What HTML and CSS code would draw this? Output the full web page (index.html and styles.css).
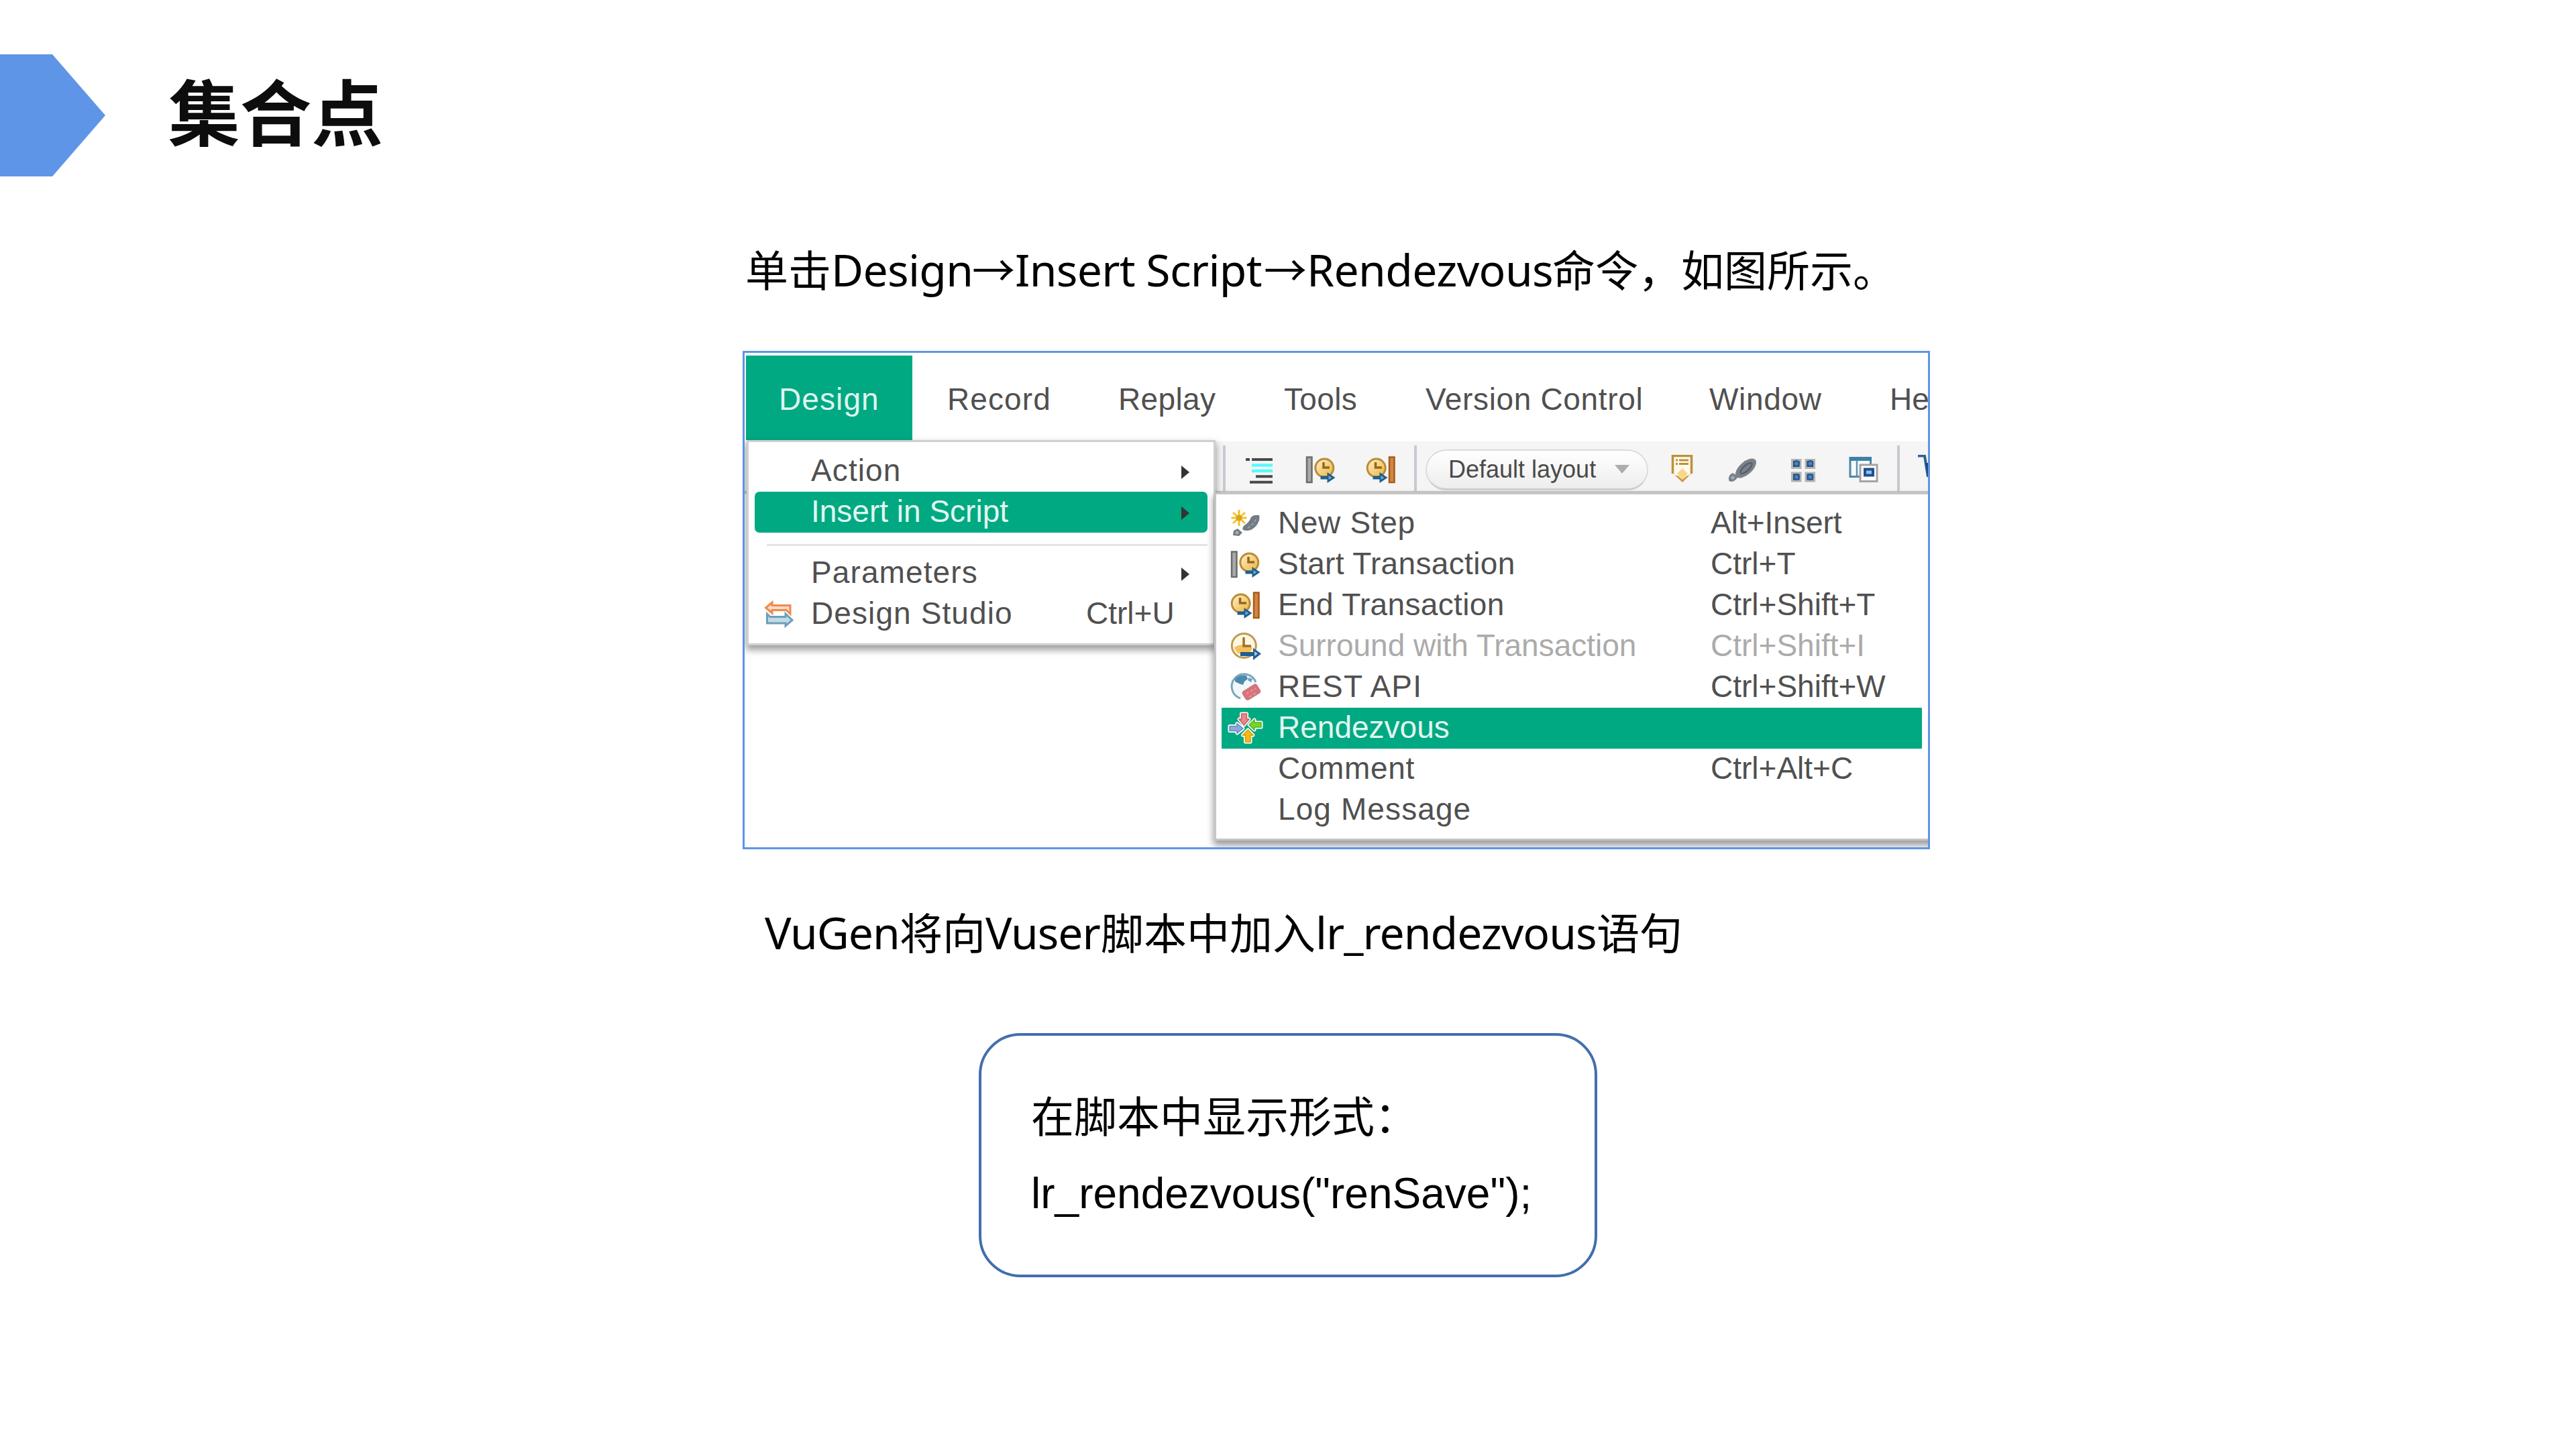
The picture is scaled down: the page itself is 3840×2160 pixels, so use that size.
FILE: index.html
```html
<!DOCTYPE html>
<html lang="zh-CN">
<head>
<meta charset="utf-8">
<title>集合点</title>
<link rel="stylesheet" href="styles.css">
</head>
<body>
<svg class="defs" aria-hidden="true">
  <defs>
    <linearGradient id="gold" x1="0" y1="0" x2="1" y2="1">
      <stop offset="0" stop-color="#fff0cd"/><stop offset="1" stop-color="#eeb23c"/>
    </linearGradient>
    <radialGradient id="dot"><stop offset="0" stop-color="#5b9ad8"/><stop offset="1" stop-color="#1d4878"/></radialGradient>
    <symbol id="arrow" viewBox="0 0 24 18">
      <path d="M1 6.5H11V1L23 9L11 17V11.5H1Z" fill="#1f5f8f"/>
      <path d="M13 6L18 9L13 12Z" fill="#7aaace"/>
    </symbol>
    <symbol id="start" viewBox="0 0 48 45">
      <rect x="3" y="3.5" width="7.5" height="37.500" fill="#a9a9a9" stroke="#6c6c6c" stroke-width="2.500"/>
      <circle cx="29.300" cy="19.500" r="13.500" fill="url(#gold)" stroke="#b98d36" stroke-width="3"/>
      <path d="M28 11V19H37" fill="none" stroke="#94691a" stroke-width="3.500"/>
      <use href="#arrow" x="22.500" y="25" width="24" height="18"/>
    </symbol>
    <symbol id="end" viewBox="0 0 48 45">
      <circle cx="16.700" cy="19.500" r="13.500" fill="url(#gold)" stroke="#b98d36" stroke-width="3"/>
      <path d="M15.500 11V19H25" fill="none" stroke="#94691a" stroke-width="3.500"/>
      <use href="#arrow" x="10.500" y="25" width="24" height="18"/>
      <rect x="36" y="3.500" width="7.500" height="37.500" fill="#cf8646" stroke="#a85c16" stroke-width="2.500"/>
    </symbol>
  </defs>
</svg>

<header class="head">
  <div class="marker"></div>
  <h1 class="title">集合点</h1>
</header>

<main class="body">
  <p class="lead">单击<span class="la l1">Design</span>→<span class="la l2">Insert Script</span>→<span class="la l3">Rendezvous</span>命令，如图所示。</p>

  <section class="shot">
    <nav class="menubar">
      <span class="tab wide">Design</span>
      <span class="wide">Record</span>
      <span class="snug">Replay</span>
      <span class="snug">Tools</span>
      <span class="mid">Version Control</span>
      <span class="mid">Window</span>
      <span>He</span>
    </nav>
    <div class="toolbar">
      <i class="sep"></i>
      <svg class="ico" viewBox="0 0 48 45"><path d="M4 7H10M13 7H44M19 32.300H44M10 40.700H44" stroke="#4a4a4a" stroke-width="4"/><path d="M13 15.500H44M13 24H44" stroke="#55fbfd" stroke-width="4.500"/></svg>
      <svg class="ico"><use href="#start"/></svg>
      <svg class="ico"><use href="#end"/></svg>
      <i class="sep"></i>
      <div class="pill"><span>Default layout</span><svg class="caret" viewBox="0 0 22 13"><path d="M0 0H22L11 13Z" fill="#adadad"/></svg></div>
      <svg class="ico" viewBox="0 0 48 45"><path d="M11 1.500H37V28H34L24 38L13 28H11Z" fill="#fffaf0"/><path d="M16 28L24 20L32 28L24 37Z" fill="#fbd68a"/><path d="M9.500 28V1.500H37.500V28" fill="none" stroke="#bd9139" stroke-width="3.500"/><path d="M8 26L24 41L39 26L33 31H31L24 37L17 31H14Z" fill="#c79a3e"/><path d="M14 8H17M19 8H33M14 13.500H17M19 13.500H33" stroke="#bd9139" stroke-width="3"/></svg>
      <svg class="ico" viewBox="0 0 48 45"><ellipse cx="29.500" cy="20" rx="19" ry="9.500" transform="rotate(-42 29.500 20)" fill="#79828b"/><ellipse cx="30" cy="20" rx="11" ry="4" transform="rotate(-42 30 20)" fill="none" stroke="#59616a" stroke-width="2.500"/><path d="M4 37Q3 30 10 27L18 32Q14 40 8 40Q4 40 4 37Z" fill="#79828b"/><circle cx="10" cy="34" r="2.500" fill="#a4abb1"/></svg>
      <svg class="ico" viewBox="0 0 48 45"><g fill="#1f4b7b" stroke="#b3b3b3" stroke-width="3"><rect x="7.500" y="7.500" width="12.500" height="12"/><rect x="28" y="7.500" width="12.500" height="12"/><rect x="7.500" y="27" width="12.500" height="12"/><rect x="28" y="27" width="12.500" height="12"/></g><g fill="url(#dot)"><circle cx="14" cy="13" r="5"/><circle cx="34.500" cy="13" r="5"/><circle cx="14" cy="33" r="5"/><circle cx="34.500" cy="33" r="5"/></g></svg>
      <svg class="ico" viewBox="0 0 48 45"><rect x="4" y="4.500" width="30.500" height="28" fill="#f8fbfd" stroke="#4b87a8" stroke-width="3"/><path d="M3 6H36" stroke="#3f80a5" stroke-width="6"/><path d="M14 8V33" stroke="#5b93b2" stroke-width="2.500"/><rect x="19" y="15" width="25" height="24.500" fill="#fff" stroke="#a3a3a3" stroke-width="3"/><rect x="26" y="21.500" width="12" height="9" fill="#8ec1f4" stroke="#1f4f8f" stroke-width="4"/></svg>
      <i class="sep"></i>
      <svg class="ico" viewBox="0 0 48 45"><path d="M1 1.500H11L16 33" fill="none" stroke="#2f618f" stroke-width="4"/><path d="M12 12H30V33H16Z" fill="#1d4c80"/></svg>
    </div>

    <div class="menu first">
      <div class="row"><span class="pic"></span><span class="name wide">Action</span><svg class="tri" viewBox="0 0 12 20"><path d="M0 0L12 10L0 20Z"/></svg></div>
      <div class="row on"><span class="pic"></span><span class="name">Insert in Script</span><svg class="tri" viewBox="0 0 12 20"><path d="M0 0L12 10L0 20Z"/></svg></div>
      <div class="rule"></div>
      <div class="row"><span class="pic"></span><span class="name wide">Parameters</span><svg class="tri" viewBox="0 0 12 20"><path d="M0 0L12 10L0 20Z"/></svg></div>
      <div class="row"><svg class="pic" viewBox="0 0 48 45"><path d="M2.500 13L12 5V9.500H39V22L33 16.500H12V21Z" fill="#fbd9c3" stroke="#f08a4d" stroke-width="3"/><path d="M4.500 22L9 26.500H32V22L42 31.500L32 40V36H4.500Z" fill="#c3d9e5" stroke="#6c9fbb" stroke-width="3"/></svg><span class="name wide">Design Studio</span><span class="key">Ctrl+U</span></div>
    </div>

    <div class="menu second">
      <div class="row"><svg class="pic" viewBox="0 0 48 45"><path d="M14 2V26M2.500 14H25.500M5 6L23 22M23 6L5 22" stroke="#f0c22e" stroke-width="3"/><circle cx="14" cy="14" r="4.500" fill="#dba514"/><path d="M20 32Q18 29 22 25Q29 21 32 13Q36 9 44 10Q46 16 41 24Q32 36 20 32Z" fill="#737b84"/><path d="M27 29Q36 24 40 14" fill="none" stroke="#9aa1a8" stroke-width="2" stroke-dasharray="4 3"/><path d="M5 40L6 33L12 30L19 36L14 41Z" fill="#737b84"/><circle cx="11" cy="36" r="2.500" fill="#a7adb3"/></svg><span class="name mid">New Step</span><span class="key">Alt+Insert</span></div>
      <div class="row"><svg class="pic"><use href="#start"/></svg><span class="name snug">Start Transaction</span><span class="key">Ctrl+T</span></div>
      <div class="row"><svg class="pic"><use href="#end"/></svg><span class="name snug">End Transaction</span><span class="key">Ctrl+Shift+T</span></div>
      <div class="row off"><svg class="pic" viewBox="0 0 48 45"><circle cx="21.300" cy="21.500" r="18" fill="#fff6e2" stroke="#bd9a55" stroke-width="3"/><path d="M7 24Q20 16 34 24Q32 35 20 35Q9 34 7 24Z" fill="#f6c15c"/><path d="M21 9V22H32" fill="none" stroke="#9c7326" stroke-width="3.500"/><path d="M16 31H35V25L47 33.500L35 43V37H16Z" fill="#1f5f8f"/><path d="M37 30L42 33.500L37 37Z" fill="#a9cbe3"/></svg><span class="name">Surround with Transaction</span><span class="key">Ctrl+Shift+I</span></div>
      <div class="row"><svg class="pic" viewBox="0 0 48 45"><circle cx="21" cy="21" r="18" fill="#f2f7fa"/><path d="M39 15A18.500 18.500 0 1 0 16 39" fill="none" stroke="#79a7bf" stroke-width="3"/><path d="M8 10Q15 3 25 5L27 10L22 14L20 19L14 17L8 14Z" fill="#4b8aad"/><path d="M28 8L34 10L32 15L27 12Z" fill="#6fa3bf"/><rect x="19.500" y="22" width="26" height="16" rx="4" transform="rotate(-32 32 30)" fill="#d4747b"/><path d="M25 32L39 24M29 37L41 30" stroke="#e59a9f" stroke-width="2" stroke-dasharray="4 3"/></svg><span class="name wide">REST API</span><span class="key">Ctrl+Shift+W</span></div>
      <div class="row on"><svg class="pic" viewBox="0 0 48 45"><g stroke="#fff" stroke-width="5" stroke-linejoin="round" fill="#fff"><path d="M17.500 1H25.500V9H29L21.500 18L14 9H17.500Z"/><path d="M29 17.500L37 10V14H47V21H37V25Z"/><path d="M27.300 25L35 33H31V43H23.500V33H19.500Z"/><path d="M0 19.500H11V15.500L20 23L11 30V26.500H0Z"/></g><path d="M17.500 1H25.500V9H29L21.500 18L14 9H17.500Z" fill="#e8888c" stroke="#cc5a62" stroke-width="1.500"/><path d="M29 17.500L37 10V14H47V21H37V25Z" fill="#74d62c" stroke="#58b31b" stroke-width="1.500"/><path d="M27.300 25L35 33H31V43H23.500V33H19.500Z" fill="#f6bd10" stroke="#d59a08" stroke-width="1.500"/><path d="M0 19.500H11V15.500L20 23L11 30V26.500H0Z" fill="#8fa9d8" stroke="#6a86bd" stroke-width="1.500"/></svg><span class="name">Rendezvous</span></div>
      <div class="row"><span class="pic"></span><span class="name mid">Comment</span><span class="key">Ctrl+Alt+C</span></div>
      <div class="row"><span class="pic"></span><span class="name wide">Log Message</span></div>
    </div>
  </section>

  <p class="note"><span class="la v1">VuGen</span>将向<span class="la v2">Vuser</span>脚本中加入<span class="la v3">lr_rendezvous</span>语句</p>

  <section class="code">
    <p class="caption">在脚本中显示形式：</p>
    <p class="stmt">lr_rendezvous("renSave");</p>
  </section>
</main>
</body>
</html>
```
FILE: styles.css
```css
* { box-sizing: border-box; }
body {
  margin: 0;
  width: 3840px;
  height: 2160px;
  background: #fff;
  color: #000;
  overflow: hidden;
  font-family: "Noto Sans", "Noto Sans CJK SC", sans-serif;
}
p, h1 { margin: 0; white-space: nowrap; }
.defs { display: block; width: 0; height: 0; }

.head { display: flex; align-items: center; height: 182px; margin-top: 81px; }
.marker {
  width: 157px;
  height: 182px;
  background: #5e95e7;
  clip-path: polygon(0 0, 78px 0, 100% 50%, 78px 100%, 0 100%);
}
.title {
  margin: 0 0 18px 94px;
  font: 700 106.67px/160px "Noto Sans CJK SC", sans-serif;
  color: #0d0d0d;
}

.body { padding: 86px 0 0 1107px; }
.lead, .note { font: 64px/100px "Noto Sans CJK SC", sans-serif; }
.lead { margin-left: 4px; }
.note { margin: 71px 0 0 33px; }
.la { display: inline-block; font-family: "Noto Sans", sans-serif; font-size: 66px; line-height: 80px; letter-spacing: -1px; }
.l1 { width: 210px; letter-spacing: -.7px; }
.l2 { width: 371px; letter-spacing: -.7px; }
.l3 { width: 366px; letter-spacing: -.6px; }
.v1 { width: 201px; }
.v2 { width: 172px; }
.v3 { width: 419px; }

.shot {
  position: relative;
  width: 1770px;
  height: 743px;
  margin-top: 74px;
  border: 3px solid #5e95e7;
  overflow: hidden;
  font: 46px/58px "Liberation Sans", Arial, sans-serif;
  color: #505050;
  white-space: nowrap;
}
.snug { letter-spacing: .35px; }
.mid { letter-spacing: .65px; }
.wide { letter-spacing: 1.1px; }
.menubar {
  display: grid;
  grid-template-columns: 302px 255px 247px 211px 423px 269px 57px;
  height: 132px;
  line-height: 139px;
}
.tab {
  width: 248px;
  height: 126px;
  margin: 4px 0 0 2px;
  padding-left: 49px;
  background: #00a982;
  color: #dff5ef;
  line-height: 131px;
}
.toolbar {
  display: grid;
  grid-template-columns: 30px 92px 90px 73px 17px 359px 89px 91px 90px 74px 30px 48px;
  grid-template-rows: 68px;
  align-items: center;
  height: 78px;
  padding: 6px 0 0 713px;
  background: #f5f5f5;
  border-bottom: 4px solid #cacaca;
}
.sep { width: 4px; height: 100%; background: #c5cbd1; }
.ico { width: 48px; height: 45px; margin-top: 4px; }
.pill {
  display: flex;
  align-items: center;
  justify-content: space-between;
  width: 332px;
  height: 61px;
  margin-top: 4px;
  padding: 0 26px 0 32px;
  border: 2px solid #dcdcdc;
  border-bottom: 3px solid #cfcfcf;
  border-radius: 31px;
  background: linear-gradient(#fff, #ededed);
  font-size: 36px;
  line-height: 50px;
  color: #4a4a4a;
}
.caret { width: 22px; height: 13px; }

.menu { position: absolute; background: #fff; }
.first {
  left: 3px;
  top: 130px;
  width: 699px;
  height: 306px;
  padding: 13px 9px 0 9px;
  border: 3px solid #cfcfcf;
  box-shadow: 0 6px 10px 1px rgba(0, 0, 0, .38);
}
.second {
  left: 700px;
  top: 208px;
  width: 1080px;
  height: 519px;
  padding: 13px 0 0 8px;
  border: 3px solid #c6c6c6;
  box-shadow: 0 6px 10px 1px rgba(0, 0, 0, .4);
}
.row { display: flex; align-items: center; height: 61px; }
.pic { flex: none; width: 48px; height: 45px; overflow: visible; }
.name, .key { height: 61px; line-height: 58px; }
.first .row { padding-left: 14px; }
.first .name { width: 410px; margin-left: 22px; }
.first .on { border-radius: 7px; }
.first .tri { width: 12px; height: 20px; margin: 2px 0 0 142px; fill: #333; }
.rule { height: 30px; padding: 17px 0 0 18px; }
.rule::before { content: ""; display: block; height: 3px; background: #e4e4e4; }
.second .row { width: 1044px; padding-left: 12px; }
.second .name { width: 645px; margin-left: 24px; }
.on { background: #00a982; color: #e2f6f0; }
.off .name, .off .key { color: #ababab; }

.code {
  width: 922px;
  height: 364px;
  margin: 103px 0 0 352px;
  padding: 60px 0 0 74px;
  border: 4px solid #426eae;
  border-radius: 62px;
}
.caption { font: 64px/113px "Noto Sans CJK SC", sans-serif; }
.stmt { margin-top: 6px; font: 64px/113px "Liberation Sans", Arial, sans-serif; }
```
